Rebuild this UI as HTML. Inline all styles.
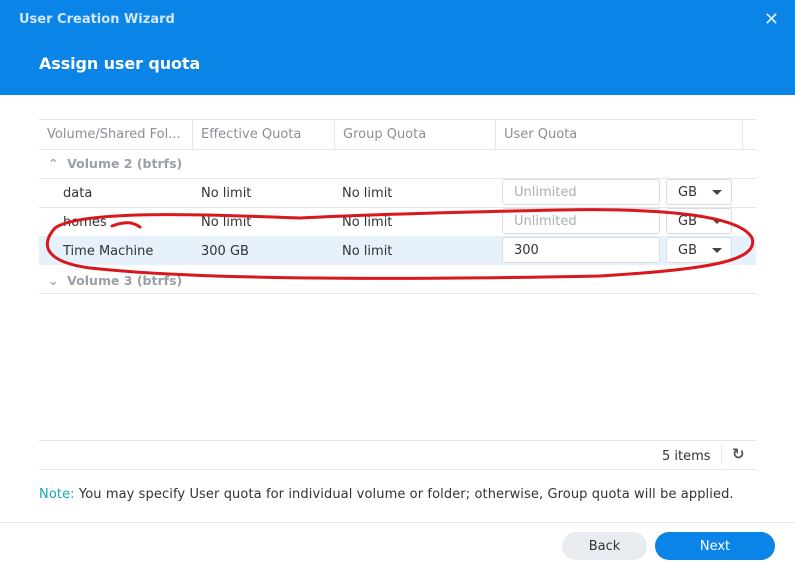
<!DOCTYPE html><html><head><style>
body{margin:0;width:795px;height:569px;background:#fff;font-family:"DejaVu Sans","Liberation Sans",sans-serif;position:relative;overflow:hidden;font-size:13px;color:#333}
.a{position:absolute}
.hd{left:0;top:0;width:795px;height:95px;background:#0b84e7}
.line{position:absolute;height:1px;background:#e3e6ea}
.vl{position:absolute;width:1px;background:#e3e6ea}
.t{position:absolute;white-space:nowrap}
.inp{position:absolute;border:1px solid #d8dde3;border-radius:3px;background:#fff;box-sizing:border-box;height:26px;padding-left:11px;line-height:26px}
.car{position:absolute;width:0;height:0;border-left:5px solid transparent;border-right:5px solid transparent;border-top:5px solid #444}
</style></head><body>
<div class="a hd"></div>
<div class="t" style="left:19px;top:12px;color:#cfe6fb;font-weight:bold;font-size:13px">User Creation Wizard</div>
<div class="t" style="left:764px;top:9px;color:#dfeefc;font-size:18px;font-weight:bold">✕</div>
<div class="t" style="left:39px;top:54px;color:#fff;font-weight:bold;font-size:16px;letter-spacing:-0.1px">Assign user quota</div>

<div class="line" style="left:39px;top:119px;width:717px"></div>
<div class="line" style="left:39px;top:149px;width:717px"></div>
<div class="vl" style="left:192px;top:120px;height:29px"></div>
<div class="vl" style="left:334px;top:120px;height:29px"></div>
<div class="vl" style="left:495px;top:120px;height:29px"></div>
<div class="vl" style="left:742px;top:120px;height:29px"></div>
<div class="t" style="left:47px;top:127px;color:#8a9096">Volume/Shared Fol...</div>
<div class="t" style="left:201px;top:127px;color:#8a9096">Effective Quota</div>
<div class="t" style="left:343px;top:127px;color:#8a9096">Group Quota</div>
<div class="t" style="left:504px;top:127px;color:#8a9096">User Quota</div>

<div class="t" style="left:48px;top:156px;color:#9aa0a6;font-weight:bold;font-size:12.5px">⌃ &nbsp;Volume 2 (btrfs)</div>
<div class="line" style="left:39px;top:178px;width:717px"></div>
<div class="t" style="left:63px;top:186px">data</div><div class="t" style="left:201px;top:186px">No limit</div><div class="t" style="left:342px;top:186px">No limit</div>
<div class="inp" style="left:502px;top:179px;width:158px;color:#aab0b6">Unlimited</div>
<div class="inp" style="left:666px;top:179px;width:66px">GB</div><div class="car" style="left:712px;top:190px"></div>
<div class="line" style="left:39px;top:207px;width:717px"></div>
<div class="t" style="left:63px;top:215px">homes</div><div class="t" style="left:201px;top:215px">No limit</div><div class="t" style="left:342px;top:215px">No limit</div>
<div class="inp" style="left:502px;top:208px;width:158px;color:#aab0b6">Unlimited</div>
<div class="inp" style="left:666px;top:208px;width:66px">GB</div><div class="car" style="left:712px;top:219px"></div>
<div class="a" style="left:39px;top:236px;width:717px;height:29px;background:#e6f1fc"></div>
<div class="t" style="left:63px;top:244px">Time Machine</div><div class="t" style="left:201px;top:244px">300 GB</div><div class="t" style="left:342px;top:244px">No limit</div>
<div class="inp" style="left:502px;top:237px;width:158px">300</div>
<div class="inp" style="left:666px;top:237px;width:66px">GB</div><div class="car" style="left:712px;top:248px"></div>
<div class="t" style="left:48px;top:273px;color:#9aa0a6;font-weight:bold;font-size:12.5px">⌄ &nbsp;Volume 3 (btrfs)</div>
<div class="line" style="left:39px;top:293px;width:717px"></div>

<div class="line" style="left:39px;top:440px;width:717px"></div>
<div class="line" style="left:39px;top:469px;width:717px"></div>
<div class="t" style="left:662px;top:449px">5 items</div>
<div class="vl" style="left:721px;top:445px;height:20px"></div>
<div class="t" style="left:732px;top:445px;font-size:15px;font-weight:bold;color:#555">↻</div>
<div class="t" style="left:39px;top:487px;letter-spacing:0.1px"><span style="color:#16a8b5">Note:</span> You may specify User quota for individual volume or folder; otherwise, Group quota will be applied.</div>
<div class="line" style="left:0;top:522px;width:795px"></div>
<div class="a" style="left:562px;top:532px;width:85px;height:28px;border-radius:14px;background:#e8ecf0;text-align:center;line-height:30px">Back</div>
<div class="a" style="left:655px;top:532px;width:120px;height:28px;border-radius:14px;background:#0b84e7;color:#fff;text-align:center;line-height:30px">Next</div>

<svg class="a" style="left:0;top:0" width="795" height="569"><path d="M300 218 C200 214 80 210 55 228 C40 245 45 262 90 268 C200 280 400 280 600 276 C700 270 760 262 752 238 C740 215 660 208 560 210 C470 212 380 214 300 218 M112 226 C125 221 133 222 140 227" fill="none" stroke="#d8181c" stroke-width="3" stroke-linecap="round"/></svg>
</body></html>
